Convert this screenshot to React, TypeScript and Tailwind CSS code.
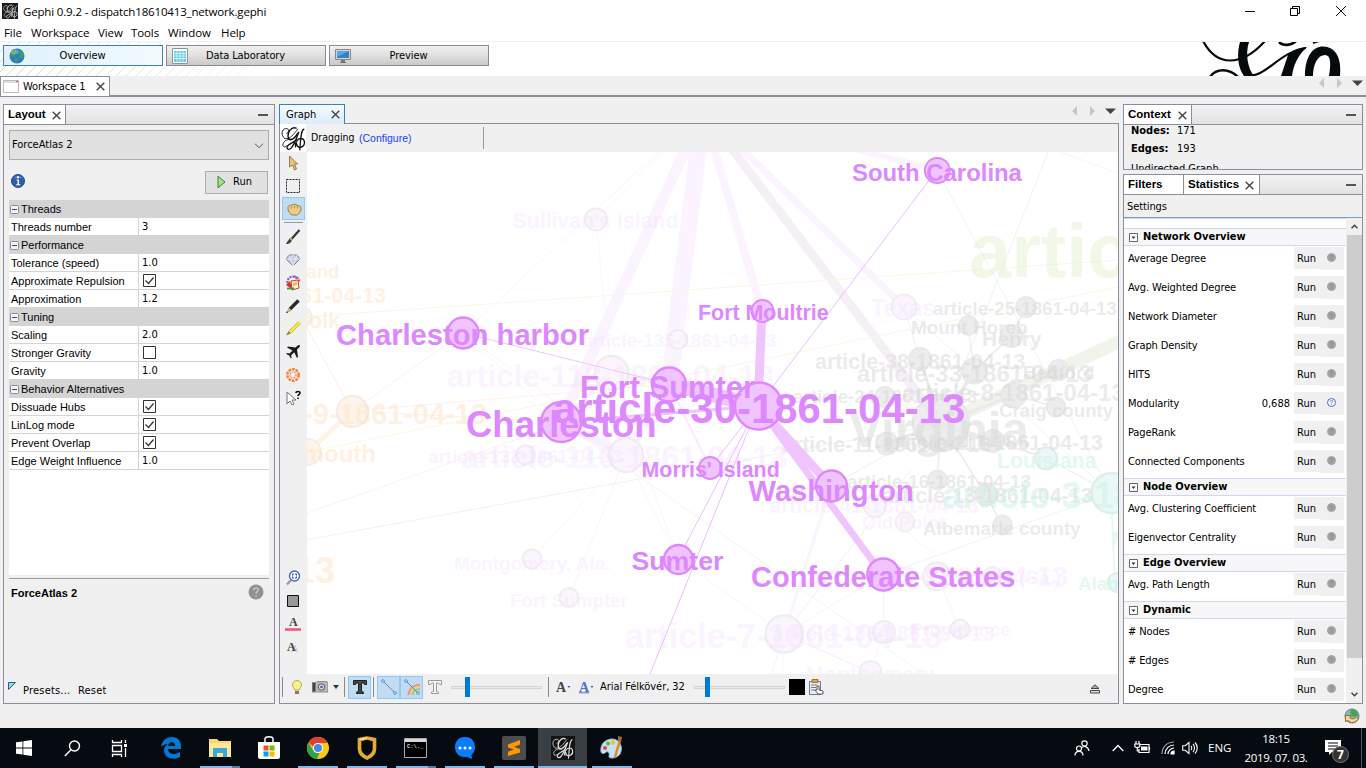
import React from "react";

type P = { children?: React.ReactNode };
const TAHOMA = "font-['DejaVu_Sans_Condensed','DejaVu_Sans',sans-serif]";

/* ---------- small shared pieces ---------- */

const Close = () => (
  <svg width="9" height="9" viewBox="0 0 9 9" className="shrink-0"><path d="M.7.7l7.6 7.6M8.3.7L.7 8.3" stroke="#444" strokeWidth="1.4" /></svg>
);
const Dash = () => <div className="mr-[6px] ml-auto h-[2px] w-[10px] bg-[#555]" />;
const Sep = () => <div className="h-5 w-px shrink-0 bg-[#8a8a8a]" />;

const Script = ({ size, color }: { size: number; color: string }) => (
  <svg width={size} height={size} viewBox="0 0 24 24" fill="none" stroke={color} strokeLinecap="round">
    <path d="M3.500 12C-.5 9 .5 3 4.500 2.500c3.500-.5 4 3.500 1 4.500" strokeWidth=".9" />
    <path d="M4 12c5 1 8-4 12-9" strokeWidth=".8" />
    <path d="M14.500 2C10 0 6.500 6 6.800 10c.3 5 5 4 9.200-3" strokeWidth="1.400" />
    <path d="M17 6c-2 5-4 12-7.500 15.500C7 24 4 21 7 18.500c3-2.500 6-3 8-6" strokeWidth="1.300" />
    <path d="M11 13c-4-1-8 1-9 4-1 3 2 4 3.500 2" strokeWidth=".9" />
    <path d="M14 20c-1-4 2-8 5-8 4 0 5 6 1 8-3 1.500-5-1-5-3" strokeWidth="1.300" />
    <path d="M22 3c-3 1-3 9-4 20" strokeWidth="1.200" />
  </svg>
);

/* ---------- top bars ---------- */

const TitleBar = () => (
  <div className="flex h-[22px] items-center bg-white font-['Open_Sans','Noto_Sans',sans-serif] text-[11.5px] text-black">
    <div className="ml-[2px] flex size-4 items-center justify-center bg-[#1c1c1c]"><Script size={15} color="#ddd" /></div>
    <span className="ml-[5px] pt-px tracking-[-0.16px] whitespace-nowrap">Gephi 0.9.2 - dispatch18610413_network.gephi</span>
    <svg className="mr-[19px] ml-auto" width="102" height="12" viewBox="0 0 102 12" fill="none" stroke="#000">
      <path d="M0 6.5h10" /><path d="M45.5 3.5h7v7h-7zM47.500 3.500v-2h7v7h-2" /><path d="M91 1l10 10M101 1L91 11" />
    </svg>
  </div>
);

const MenuBar = () => (
  <div className="flex h-5 items-center border-b border-[#f0f0f0] bg-white pt-[2px] pl-1 font-['Open_Sans','Noto_Sans',sans-serif] text-[11.5px] leading-4 tracking-[-0.1px] text-black">
    <span className="w-[27px]">File</span>
    <span className="w-[67px]">Workspace</span>
    <span className="w-[33px]">View</span>
    <span className="w-[37px]">Tools</span>
    <span className="w-[53px]">Window</span>
    <span>Help</span>
  </div>
);

const Globe = () => (
  <svg width="16" height="16" viewBox="0 0 16 16"><circle cx="8" cy="8" r="7.5" fill="#2c7cc0" /><path d="M2 3c3-3 5-2 6 0l-2 3-1 3-3-1zM9 2c4 0 6 3 6 6l-3 3-2-3 1-3zM6 10l3 1-1 4-3-2z" fill="#3f9f55" /><ellipse cx="6" cy="4" rx="4" ry="2.500" fill="#fff" opacity=".25" /></svg>
);
const Grid = () => (
  <svg width="16" height="16" viewBox="0 0 16 16"><path d="M.5.5h15v15H.5z" fill="#fff" stroke="#7d9aa0" /><path d="M2 3h12v11H2z" fill="#66c9ea" /><path d="M2 5.500h12M2 8h12M2 10.500h12M5 3v11M8 3v11M11 3v11" stroke="#e6f8fd" strokeWidth=".8" /></svg>
);
const Monitor = () => (
  <svg width="16" height="16" viewBox="0 0 16 16"><path d="M.5 1.500h15v10H.5z" fill="#d5d5d5" stroke="#888" /><path d="M2 3h12v7H2z" fill="#2f83cd" /><path d="M2 3h12L2 9z" fill="#58a5e2" /><path d="M6 12h4v2h1v1H5v-1h1z" fill="#777" /></svg>
);

const ModeButton = ({ icon, label, on }: { icon: React.ReactNode; label: string; on?: boolean }) => (
  <div className={`flex h-[21px] w-40 items-center border pl-[5px] ${on ? "border-[#3c7fb1] bg-linear-to-r from-[#dff2fb] to-[#f3fafe]" : "border-[#8b8b98] bg-linear-to-b from-[#f0f0f0] via-[#e0e0e0] to-[#c9c9c9]"}`}>
    {icon}
    <span className="flex-1 pt-px pr-[22px] text-center text-[11px] tracking-[-0.1px]">{label}</span>
  </div>
);

const ModeBar = () => (
  <div className={`flex h-[34px] bg-white pt-[3px] pl-[3px] ${TAHOMA}`}>
    <svg className="absolute top-[42px] left-0" width="310" height="34">
      <defs><linearGradient id="hf"><stop offset="0" stopColor="#fff" stopOpacity="0" /><stop offset="1" stopColor="#fff" /></linearGradient></defs>
      {Array.from({ length: 36 }, (_, i) => <path key={i} d={`M${i * 10 - 34} 34l34-34`} stroke="#d4d4d4" />)}
      <rect width="310" height="34" fill="url(#hf)" />
    </svg>
    <div className="relative flex gap-[3px]">
      <ModeButton icon={<Globe />} label="Overview" on />
      <ModeButton icon={<Grid />} label="Data Laboratory" />
      <ModeButton icon={<Monitor />} label="Preview" />
    </div>
    <svg className="-mt-[3px] mr-[24px] ml-auto" width="140" height="34" viewBox="0 0 140 34" fill="none" stroke="#050a0c">
      <path d="M1 -1c7 13 16 19.500 27 19.500C42 18.500 54 9 63 -1" strokeWidth="2.200" />
      <path d="M8 35c6-9 19-9 28 0" strokeWidth="2.400" />
      <path d="M38 0h9c-4 12-1 27 5 34H42C35 25 35 10 38 0z" fill="#050a0c" stroke="none" />
      <path d="M46 33c16 4 32-24 58-27" strokeWidth="2.200" />
      <path d="M105 5c-8 1-14 3-19 8l-7 21h11c1-10 6-21 15-29z" fill="#050a0c" stroke="none" />
      <path d="M77 0c4 4 12 4 17-1" strokeWidth="2.600" />
      <path d="M103 34C103 14 111 4.500 121 4.500c12 0 19 11 17 29.500h-11c2-12 2-21-4-21-7 0-12 9-12 21z" fill="#050a0c" stroke="none" />
      <path d="M111 1l6-2" strokeWidth="2" />
    </svg>
  </div>
);

const Arrows = () => (
  <svg width="47" height="12" viewBox="0 0 47 12"><path d="M7 1v10L2 6zM20 1v10l5-5z" fill="#c6c6c6" /><path d="M35 3.500h11L40.500 9z" fill="#444" /></svg>
);

const WorkspaceTabs = () => (
  <div className={`flex h-[21px] border-b-2 border-[#8b8e9b] bg-[#f0f0f0] text-[11px] ${TAHOMA}`}>
    <div className="flex h-5 w-[110px] items-center border border-b-0 border-[#8b8e9b] bg-white pl-[2px]">
      <svg width="16" height="14" viewBox="0 0 16 14"><path d="M.5.5h15v12H.5z" fill="#fff" stroke="#bbb" /><path d="M1 1h14v2H1z" fill="#ddd" /><path d="M13 1h2v1h-2z" fill="#d55" /></svg>
      <span className="ml-[4px] w-[73px] pt-px tracking-[-0.1px] whitespace-nowrap">Workspace 1</span>
      <Close />
    </div>
    <div className="mt-px mr-[2px] ml-auto"><Arrows /></div>
  </div>
);

/* ---------- layout panel ---------- */

const Tab = ({ children, className = "" }: P & { className?: string }) => (
  <div className={`flex h-full shrink-0 items-center border-r border-[#8b8e9b] bg-white pt-px pl-[4px] font-['Liberation_Sans',sans-serif] text-[11.5px] font-bold ${className}`}>{children}</div>
);
const Head = ({ children }: P) => (
  <div className="flex h-5 shrink-0 items-center border-b border-[#8b8e9b] bg-linear-to-b from-[#f2f2f2] to-[#e2e2e2]">{children}</div>
);

const Group = ({ label }: { label: string }) => (
  <div className="flex h-[18px] items-center bg-[#d4d4d4] pl-px">
    <svg width="9" height="9" viewBox="0 0 9 9"><rect x=".5" y=".5" width="8" height="8" rx="1" fill="#f4f4f4" stroke="#8e8e8e" /><path d="M2 4.500h5" stroke="#2a4a9a" /></svg>
    <span className="ml-[2px]">{label}</span>
  </div>
);
const Prop = ({ label, value }: { label: string; value: string | boolean }) => (
  <div className="flex h-[18px] border-b border-[#d4d4d4]">
    <span className="w-[130px] shrink-0 border-r border-[#d4d4d4] pt-px pl-[2px] leading-[17px] whitespace-nowrap">{label}</span>
    {typeof value === "string" ? (
      <span className={`pl-[3px] leading-[18px] ${TAHOMA}`}>{value}</span>
    ) : (
      <svg className="ml-1 mt-[2px]" width="13" height="13" viewBox="0 0 13 13"><path d="M.5.5h12v12H.5z" fill="#fff" stroke="#333" />{value && <path d="M2.500 6.500l3 3 5-6" fill="none" stroke="#333" strokeWidth="1.200" />}</svg>
    )}
  </div>
);

const LayoutPanel = () => (
  <div className="flex h-[600px] w-[272px] shrink-0 flex-col border border-[#8b8e9b] bg-[#f0f0f0]">
    <Head><Tab className="w-[62px] justify-between pr-[4px]">Layout<Close /></Tab><Dash /></Head>
    <div className={`mx-[5px] mt-[5px] flex h-[30px] items-center justify-between border border-[#adadad] bg-[#e1e1e1] pt-px pr-1 pl-[2px] text-[11px] ${TAHOMA}`}>
      ForceAtlas 2
      <svg width="10" height="6" viewBox="0 0 10 6" fill="none" stroke="#555"><path d="M1 .7l4 4 4-4" /></svg>
    </div>
    <div className="flex h-[40px] items-center justify-between pt-[4px] pr-[6px] pl-[7px]">
      <svg className="mb-[2px]" width="14" height="14" viewBox="0 0 15 15"><circle cx="7.500" cy="7.500" r="7" fill="#2f5fb3" stroke="#254a91" /><path d="M3 4a6 5 0 0 1 9 0z" fill="#7fa3dc" /><path d="M6 6h2.500v5H10v1H5.500v-1H7V7H6zM6.500 2.500h2v2h-2z" fill="#fff" /></svg>
      <div className={`flex h-[23px] w-[63px] items-center border border-[#adadad] bg-[#e1e1e1] pl-[11px] text-[11px] ${TAHOMA}`}>
        <svg width="9" height="14" viewBox="0 0 9 14"><path d="M1 1.200v11.600L8 7z" fill="#a9dd93" stroke="#2e8b1e" /></svg>
        <span className="ml-[7px] pt-px">Run</span>
      </div>
    </div>
    <div className="mx-[5px] h-[375px] bg-white font-['Liberation_Sans',sans-serif] text-[11px]">
      <Group label="Threads" />
      <Prop label="Threads number" value="3" />
      <Group label="Performance" />
      <Prop label="Tolerance (speed)" value="1.0" />
      <Prop label="Approximate Repulsion" value={true} />
      <Prop label="Approximation" value="1.2" />
      <Group label="Tuning" />
      <Prop label="Scaling" value="2.0" />
      <Prop label="Stronger Gravity" value={false} />
      <Prop label="Gravity" value="1.0" />
      <Group label="Behavior Alternatives" />
      <Prop label="Dissuade Hubs" value={true} />
      <Prop label="LinLog mode" value={true} />
      <Prop label="Prevent Overlap" value={true} />
      <Prop label="Edge Weight Influence" value="1.0" />
    </div>
    <div className="mx-[5px] mt-[3px] flex h-[104px] justify-between border-t border-[#9a9a9a] pt-[5px] pr-[5px] pl-[2px]">
      <span className="pt-px font-['Liberation_Sans',sans-serif] text-[11px] font-bold">ForceAtlas 2</span>
      <svg width="16" height="16" viewBox="0 0 16 16"><circle cx="8" cy="8" r="7.500" fill="#919191" /><path d="M5.700 6.200c0-3 4.600-3 4.600-.2 0 1.600-2.300 1.700-2.300 3.700M8 11.300v1.400" fill="none" stroke="#c4c4c4" strokeWidth="1.500" /></svg>
    </div>
    <div className={`flex pl-[4px] text-[11px] ${TAHOMA}`}>
      <svg width="8" height="9" viewBox="0 0 8 9"><path d="M.5.5h7l-7 7z" fill="#9fd4ef" stroke="#1d5f8f" /></svg>
      <span className="mt-[1px] ml-[7px] w-[55px] tracking-[0.2px]">Presets...</span>
      <span className="mt-[1px] tracking-[0.2px]">Reset</span>
    </div>
  </div>
);

/* ---------- graph ---------- */

type Tone = "p" | "g" | "o" | "t" | "l" | "h";
const FILL: Record<Tone, string> = { p: "#faf5fd", g: "#eaeaea", o: "#fff2e6", t: "#e8f8f4", l: "#f0f7e8", h: "#efc4ff" };
const RING: Record<Tone, string> = { p: "#efedf1", g: "#e8e8e8", o: "#f3ede6", t: "#deefea", l: "#e8efe0", h: "#dd88ff" };
const INK: Record<Tone, string> = { p: "#f5e0ff", g: "#d8d8d8", o: "#ffe2c4", t: "#c9f1e6", l: "#dff0cc", h: "#dd88ff" };
const INK_ALPHA: Record<Tone, number> = { p: 0.4, g: 0.5, o: 0.5, t: 0.5, l: 0.45, h: 1 };

type Edge = [number, number, number, number, number, string];
const faintEdges: Edge[] = [
  [703, 111, 561, 422, 11, "#fbf3ff"], [703, 111, 669, 384, 17, "#fbf3ff"], [703, 111, 762, 311, 8, "#fbf3ff"],
  [703, 111, 941, 424, 9, "#f5f0f6"], [703, 111, 904, 307, 7, "#fbf3ff"], [703, 111, 937, 170, 6, "#fbf3ff"],
  [703, 111, 596, 219, 1, "#fbf3ff"], [703, 111, 463, 333, 1, "#fbf3ff"], [596, 219, 611, 373, 1, "#fbf3ff"],
  [301, 317, 1118, 260, 1, "#f8f8e2"], [308, 452, 1118, 287, 1, "#f8f8e2"],
  [463, 333, 352, 411, 1, "#fff0f0"], [463, 333, 561, 422, 1, "#fbf3ff"], [463, 333, 626, 455, 1, "#fbf3ff"],
  [352, 411, 669, 384, 1, "#fff0f0"], [352, 411, 561, 422, 1, "#fff0f0"], [301, 317, 352, 411, 1, "#ffeedd"],
  [352, 411, 308, 452, 5, "#fff2e6"], [300, 541, 941, 424, 1, "#f9efe6"], [307, 513, 561, 424, 1, "#fff0f0"],
  [626, 455, 532, 559, 1, "#fbf3ff"], [626, 455, 569, 598, 1, "#fbf3ff"], [626, 455, 678, 559, 1, "#fbf3ff"],
  [611, 373, 678, 559, 1, "#fbf3ff"], [561, 422, 925, 675, 1, "#eef6fd"], [561, 422, 626, 455, 9, "#fbf0ff"],
  [561, 422, 611, 373, 4, "#fbf0ff"], [611, 373, 669, 384, 4, "#fbf0ff"], [678, 340, 671, 384, 1, "#fbf3ff"],
  [669, 384, 626, 455, 8, "#fbf3ff"], [669, 384, 710, 468, 2, "#f9eaff"], [525, 455, 561, 422, 1, "#fbf3ff"],
  [678, 559, 784, 634, 1, "#fbf3ff"], [831, 486, 784, 634, 3, "#fbf3ff"], [784, 634, 883, 575, 1, "#fbf3ff"],
  [784, 634, 911, 470, 1, "#f2f0f2"], [784, 634, 870, 672, 1, "#f9ebff"], [784, 634, 771, 676, 1, "#fff0f0"],
  [784, 634, 782, 676, 1, "#fbf3ff"], [883, 575, 884, 632, 1, "#f7f0fa"], [884, 632, 870, 672, 1, "#fbf3ff"],
  [883, 575, 1111, 493, 1, "#e8f7f5"], [875, 506, 960, 575, 1, "#fbf3ff"], [937, 576, 960, 629, 1, "#fbf3ff"],
  [937, 170, 1111, 493, 1, "#eaf7f5"], [1048, 152, 941, 424, 1, "#f1f3e9"], [1060, 152, 1118, 173, 1, "#f0f7f5"],
  [904, 307, 1111, 493, 1, "#eaf7f5"], [904, 307, 920, 359, 1, "#f3eef4"], [941, 424, 1125, 339, 13, "#f0f4eb"],
  [941, 424, 1046, 458, 2, "#e9f0ed"], [1046, 458, 1111, 493, 1, "#e0f4ef"], [1111, 493, 1115, 583, 2, "#e8f8f4"],
  [941, 424, 920, 359, 3, "#ebebeb"], [941, 424, 974, 371, 4, "#ebebeb"], [974, 371, 968, 325, 1, "#ebebeb"],
  [974, 371, 1011, 336, 1.500, "#ebebeb"], [1011, 336, 1026, 307, 1.500, "#ebebeb"], [941, 424, 885, 397, 1, "#ebebeb"],
  [941, 424, 1013, 395, 3, "#ebebeb"], [1013, 395, 1058, 370, 2, "#ebebeb"], [1013, 395, 1056, 407, 1.500, "#ebebeb"],
  [941, 424, 887, 443, 3, "#ebebeb"], [941, 424, 993, 441, 4, "#ebebeb"], [941, 424, 937, 480, 1.500, "#ebebeb"],
  [941, 424, 986, 495, 1.500, "#ebebeb"], [986, 495, 1002, 525, 1.500, "#ebebeb"], [941, 424, 831, 486, 1, "#f1eef2"],
];
const strongEdges: Edge[] = [
  [463, 333, 669, 384, 1, "#efc4ff"], [758, 406, 937, 170, 1, "#ecbcfd"], [758, 406, 762, 311, 9, "#efc4ff"],
  [758, 406, 669, 384, 15, "#efc4ff"], [758, 406, 561, 422, 3, "#efc4ff"], [758, 406, 710, 468, 1, "#ecbcfd"],
  [758, 406, 678, 559, 1, "#ecbcfd"], [758, 406, 650, 674, 1, "#ecbcfd"], [758, 406, 831, 486, 9, "#efc4ff"],
  [758, 406, 883, 575, 7, "#efc4ff"],
];
type Node = [number, number, number, Tone];
const nodes: Node[] = [
  [596, 219.500, 12, "p"], [611.500, 373, 18, "p"], [678, 339.500, 10.500, "p"], [626, 455, 18, "p"], [525.500, 455, 10.500, "p"],
  [904, 307, 13.500, "p"], [532, 559, 10.500, "p"], [569, 597.500, 10.500, "p"], [784, 634, 19.500, "p"], [884, 632, 12, "p"],
  [960, 629, 10.500, "p"], [870.500, 672, 12, "p"], [875, 506, 12, "p"], [905, 522, 10.500, "p"], [937, 576.500, 15, "p"], [992.500, 576, 10, "p"],
  [941, 423, 29, "g"], [1026, 307, 11, "g"], [968.500, 325.500, 10.500, "g"], [1011.500, 336, 12, "g"], [920, 359, 12, "g"],
  [974, 371, 13.500, "g"], [885, 397, 11, "g"], [1013.500, 395, 13.500, "g"], [1056, 407, 10.500, "g"], [1058.500, 370, 11, "g"],
  [887, 443.500, 12, "g"], [993, 441, 12, "g"], [937.500, 480, 10.500, "g"], [986.500, 494.500, 12, "g"], [1002.500, 525, 10.500, "g"],
  [1046, 458.500, 12, "t"], [1111.500, 493, 21, "t"], [1117, 582.500, 10.500, "t"],
  [301, 317, 11.500, "o"], [352.500, 411.500, 16.500, "o"], [308, 452, 14, "o"],
  [937.300, 170.500, 13.5, "h"], [762.500, 311, 12, "h"], [463, 333, 16.5, "h"], [669, 384.500, 18, "h"], [561.300, 422, 21, "h"],
  [758.500, 406, 24.5, "h"], [710, 468, 12, "h"], [831.500, 486, 16.5, "h"], [678.500, 559.500, 15.500, "h"], [883.300, 574.500, 17, "h"],
];
/* x of the left edge (or right edge for clipped labels), baseline, font size, text, tone */
type Label = [number, number, number, string, Tone, ("end" | "start")?];
const labels: Label[] = [
  [512.500, 228, 21.300, "Sullivan's Island", "p"], [447, 387, 31.600, "article-118-1861-04-13", "p"], [582, 347, 18.700, "article-135-1861-04-13", "p"],
  [461, 468, 31.600, "article-116-1861-04-13", "p"], [428, 463, 18.700, "article-133-1861-04-13", "p"], [871, 316, 23.200, "Texas", "p"],
  [454, 569.500, 18.900, "Montgomery, Ala.", "p"], [510, 607, 18.800, "Fort Sumpter", "p"], [625, 647.500, 34.200, "article-7-1861-04-13", "p"],
  [772, 641, 21.400, "article-136-1861-04-13", "p"], [910, 636, 18.700, "Providence", "p"], [806, 681.500, 21.400, "Montgomery", "p"],
  [769, 513, 21.400, "article-41-1861-04-13", "p"], [862, 529, 18.800, "Old Point", "p"], [1068, 586, 28.200, "article-5-1861-04-13", "p", "end"],
  [1061, 584, 18.700, "Savannah (Ga.)", "p", "end"],
  [849, 446.500, 49.300, "Virginia", "g"], [933, 315, 18.700, "article-25-1861-04-13", "g"], [911, 333.500, 18.900, "Mount Horeb", "g"],
  [982, 346, 21, "Henry", "g"], [815, 369, 21.400, "article-38-1861-04-13", "g"], [857, 382, 23.900, "article-33-1861-04-13", "g"],
  [793, 403, 18.700, "article-24-1861-04-13", "g"], [902, 401, 24, "article-8-1861-04-13", "g"], [999, 417, 18.700, "Craig county", "g"],
  [1023, 378.500, 18.700, "Bedford", "g"], [782, 452, 21.400, "article-11-1861-04-13", "g"], [883, 449.500, 21.400, "article-111-1861-04-13", "g"],
  [847, 488, 18.700, "article-16-1861-04-13", "g"], [882, 503, 21.400, "article-13-1861-04-13", "g"], [923, 534.500, 18.800, "Albemarle county", "g"],
  [997, 467.500, 21.300, "Louisiana", "t"], [942, 508, 36.400, "article-3-1861-04-13", "t"], [1078, 590, 18.700, "Alabama", "t"], [1112, 545, 18.700, "Mobile", "t"],
  [969, 277, 76, "article-1-1861-04-13", "l"],
  [339.500, 278, 18.700, "Maryland", "o", "end"], [386, 303, 21.400, "article-12-1861-04-13", "o", "end"], [340, 328, 21.400, "Norfolk", "o", "end"],
  [487, 423.500, 29, "article-9-1861-04-13", "o", "end"], [376, 462, 24, "Portsmouth", "o", "end"], [335, 583, 36, "article-6-1861-04-13", "o", "end"],
  [336, 344.700, 29.200, "Charleston harbor", "h"], [580, 397.500, 30.900, "Fort Sumter", "h"], [466, 436.700, 36.500, "Charleston", "h"],
  [553, 423.300, 41.900, "article-30-1861-04-13", "h"], [852, 180.700, 23.900, "South Carolina", "h"], [698, 320, 21.400, "Fort Moultrie", "h"],
  [641.500, 477, 21.400, "Morris' Island", "h"], [748.500, 500.700, 29.1, "Washington", "h"], [631.500, 570, 26.700, "Sumter", "h"], [751, 586.500, 29, "Confederate States", "h"],
];

const LabelText = ({ l }: { l: Label }) => (
  <text x={l[0]} y={l[1]} fontSize={l[2]} fill={INK[l[4]]} fillOpacity={INK_ALPHA[l[4]]} textAnchor={l[5] ?? "start"}>{l[3]}</text>
);
const drawEdge = (e: Edge, i: number) => <line key={i} x1={e[0]} y1={e[1]} x2={e[2]} y2={e[3]} strokeWidth={e[4]} stroke={e[5]} />;
const drawNode = (n: Node, i: number) => (
  <circle key={i} cx={n[0]} cy={n[1]} r={n[2] - 1} fill={FILL[n[3]]} fillOpacity={n[3] === "h" ? 1 : 0.850} stroke={RING[n[3]]} strokeWidth={n[2] > 15 ? 2.400 : 1.800} />
);

const Canvas = () => (
  <svg width="811" height="522" viewBox="307 152 811 522" className="block bg-white font-['Liberation_Sans',sans-serif] font-bold">
    {faintEdges.map(drawEdge)}
    {nodes.filter((n) => n[3] !== "h").map(drawNode)}
    {labels.filter((l) => l[4] !== "h").map((l) => <LabelText key={l[3]} l={l} />)}
    {strongEdges.map(drawEdge)}
    {nodes.filter((n) => n[3] === "h").map(drawNode)}
    {labels.filter((l) => l[4] === "h").map((l) => <LabelText key={l[3]} l={l} />)}
  </svg>
);

const Ico = ({ children, on }: P & { on?: boolean }) => (
  <div className={`flex h-[23px] w-[23px] shrink-0 items-center justify-center ${on ? "border border-[#90c8f6] bg-[#bfdcf3]" : ""}`}>
    <svg width="16" height="16" viewBox="0 0 16 16" fill="none" className="shrink-0">{children}</svg>
  </div>
);

const ToolStrip = () => (
  <div className="flex h-[522px] w-[27px] shrink-0 flex-col items-start bg-[#f0f0f0] pl-[1px]">
    <div className="-mt-px"><Ico><path d="M4.5 1v11l3-2 2 5 2-1-2-5h3z" fill="#e8c478" stroke="#8f7138" strokeWidth=".9" /></Ico></div>
    <Ico><path d="M1.500 1.500h13v13h-13z" stroke="#222" strokeDasharray="2 1" /></Ico>
    <div className="ml-px"><Ico on><path d="M2 7c0-3 2-3 3-2 0-2 3-2 3-1 1-1 3-1 3 1 2-1 4 0 4 2 0 4-2 6-4 7H6C3 12 2 10 2 7z" fill="#ecca8c" stroke="#a67c35" /><path d="M5.500 5.500v2M8.500 5v2M11.500 5.500v2" stroke="#b68d45" /></Ico></div>
    <div className="mt-[2px] mb-[2px] ml-[3px] h-px w-[19px] shrink-0 bg-[#999]" />
    <Ico><path d="M14.500 1l-8 9" stroke="#333" strokeWidth="2.200" /><path d="M7 10l-2-1-3 4-1 2c3 0 6-1 6-5z" fill="#444" /><path d="M5 9l2 2" stroke="#c9a978" strokeWidth="2" /></Ico>
    <Ico><path d="M4 3h8l3 4-7 7-7-7z" fill="#c3c8dc" stroke="#7d84a0" /><path d="M1 7h14M4 3l4 11 4-11M5 7l3-4 3 4" stroke="#eef1fa" strokeWidth=".8" /></Ico>
    <Ico><path d="M2.500 8a5.500 5.500 0 0 1 10-4" stroke="#7a65c8" strokeWidth="2.200" strokeDasharray="2 1" /><path d="M9 1.500c3 0 5 2 5.500 5" stroke="#e0459a" strokeWidth="2" strokeDasharray="2 1" /><path d="M1 10l4-4 2 8z" fill="#d33030" /><path d="M6 6l7-1 1 8-7 2z" fill="#f8efe0" stroke="#c8402a" /><path d="M8 8l4-1v3l-4 1z" fill="#f2b93a" /><path d="M2 13.500h7" stroke="#4a9a3a" strokeWidth="2" /></Ico>
    <Ico><path d="M13.500 2.500L5 11" stroke="#2a2a2a" strokeWidth="3.400" /><path d="M3.300 9.500l3.200 3.200L2 15z" fill="#c9a978" /><path d="M1 15l1-2 1 1.500z" fill="#111" /></Ico>
    <Ico><path d="M14.500 1.500L5 11" stroke="#c3b61c" strokeWidth="3.400" /><path d="M14.500 1.500L5 11" stroke="#f7ee4c" strokeWidth="2" /><path d="M3.500 10l2.500 2.500-5 2z" fill="#8a8a3a" /></Ico>
    <Ico><path d="M14.800 1.200c-1-.8-2.300 0-4.300 2.300L3 2.600l-1 1L7.500 6.500l-3 3-2.500-.4-.8.8 3 1.600L5.800 14.500l.8-.8-.4-2.500 3-3L12 14l1-1-1-7.500c2.300-2 3.500-3.500 2.800-4.300z" fill="#1b1b1b" /></Ico>
    <Ico><circle cx="8" cy="8" r="5.700" stroke="#ff7a3c" strokeWidth="2.400" strokeDasharray="2.600 1" /><circle cx="8" cy="8" r="3" stroke="#ff7a3c" strokeWidth="1.200" strokeDasharray="1.500 1" /></Ico>
    <Ico><path d="M2 2v12l3-3 2 4 2-1-2-4h4z" fill="#fff" stroke="#777" /><path d="M11 3c0-2 4-2 4 0 0 1.500-2 1.500-2 3M13 7.500V9" stroke="#111" strokeWidth="1.600" /></Ico>
    <div className="flex-1" />
    <Ico><circle cx="9.500" cy="6" r="5" fill="#fff" stroke="#4468c4" strokeWidth="1.400" /><path d="M7.500 5.500V4H9M10 4h1.500v1.500M11.500 6.500V8H10M9 8H7.500V6.500" stroke="#2447a8" /><path d="M6 10l-4 4.500" stroke="#999" strokeWidth="2.200" /></Ico>
    <Ico><path d="M2.500 2.500h11v11h-11z" fill="#999" stroke="#111" /></Ico>
    <Ico><text x="4" y="10" fontSize="12" fontWeight="bold" fontFamily="Liberation Serif" fill="#444">A</text><path d="M0 13.500h16" stroke="#ff4f7f" strokeWidth="2.600" /></Ico>
    <Ico><text x="6" y="13" fontSize="10" fontWeight="bold" fontFamily="Liberation Serif" fill="#ccc">A</text><text x="2" y="12" fontSize="12" fontWeight="bold" fontFamily="Liberation Serif" fill="#444">A</text></Ico>
    <div className="h-4 shrink-0" />
  </div>
);

const Slider = ({ lead, className = "" }: { lead: string; className?: string }) => (
  <div className={`flex w-[91px] shrink-0 items-center ${className}`}>
    <div className={`h-[3px] border border-r-0 border-[#d4d4d4] bg-[#e7eaea] ${lead}`} />
    <div className="h-5 w-[5px] bg-[#0078d7]" />
    <div className="h-[3px] flex-1 border border-l-0 border-[#d4d4d4] bg-[#e7eaea]" />
  </div>
);
const BigT = ({ fill, stroke }: { fill: string; stroke: string }) => (
  <path d="M1.500 1.500h13v4h-2l-1-1.500H9.500v8.500l2 .5v1.500h-7V13l2-.5V4h-2l-1 1.500h-2z" fill={fill} stroke={stroke} />
);

const GraphBottom = () => (
  <div className={`flex h-[29px] items-center bg-[#f0f0f0] pb-[3px] pl-[2px] text-[11px] ${TAHOMA}`}>
    <Sep />
    <div className="ml-[2px]"><Ico><path d="M3.500 6a4.500 4.500 0 1 1 9 0c0 2-2 3-2 5h-5c0-2-2-3-2-5z" fill="#faf08a" stroke="#b5a95a" /><path d="M6 12h4v3H6z" fill="#8a7a5a" /></Ico></div>
    <Ico><path d="M0 3.500h4l1-1h9l2 1V13H0z" fill="#b9b9b9" stroke="#8a8a8a" /><path d="M.5 4h3v8.500h-3z" fill="#444" /><circle cx="9.500" cy="8" r="3.200" fill="#d8dcec" stroke="#555" /><circle cx="9.500" cy="8" r="1.300" fill="#4a5a9a" /></Ico>
    <svg className="ml-[2px]" width="6" height="4" viewBox="0 0 6 4"><path d="M0 0h6L3 4z" fill="#333" /></svg>
    <div className="mr-[3px] ml-[5px] flex"><Sep /></div>
    <Ico on><BigT fill="#444" stroke="#222" /></Ico>
    <div className="mx-[2px] flex"><Sep /></div>
    <div className="ml-px flex">
      <Ico on><path d="M2 2l12 12" stroke="#5b86c8" /><circle cx="2" cy="2" r="1.300" fill="#fff" stroke="#5b86c8" /><circle cx="14" cy="14" r="1.300" fill="#fff" stroke="#5b86c8" /></Ico>
      <Ico on><path d="M4.500 16C5 10 9 6 16 6" stroke="#f08a9a" strokeWidth="2" /><path d="M6.500 16C7 11 10 8 16 8" stroke="#f2d36a" strokeWidth="2" /><path d="M8.500 16c.5-4 3-6 7.500-6" stroke="#8fd08a" strokeWidth="2" /><path d="M2 2l12 12" stroke="#5b86c8" /><circle cx="2" cy="2" r="1.300" fill="#fff" stroke="#5b86c8" /><circle cx="14" cy="14" r="1.300" fill="#fff" stroke="#5b86c8" /></Ico>
    </div>
    <Ico><BigT fill="#f5f5f5" stroke="#9a9a9a" /></Ico>
    <Slider lead="w-[14px]" className="ml-[5px]" />
    <div className="mr-[3px] ml-[6px] flex"><Sep /></div>
    <Ico><text x="0" y="13" fontSize="14" fontWeight="bold" fontFamily="Liberation Serif" fill="#444">A</text><path d="M11.500 7h3l-1.500 2z" fill="#335ab8" /></Ico>
    <Ico><text x="0" y="13" fontSize="14" fontWeight="bold" fontFamily="Liberation Serif" fill="#4a6fd0">A</text><path d="M0 13.800h10" stroke="#4a6fd0" /><path d="M11.500 7h3l-1.500 2z" fill="#335ab8" /></Ico>
    <span className="w-[96px] pt-px pl-[2px] tracking-[-0.05px] whitespace-nowrap">Arial Félkövér, 32</span>
    <Slider lead="w-[11px]" />
    <div className="ml-1 size-4 bg-black" />
    <Ico><path d="M.5 2.500h11v13H.5z" fill="#e9eef6" stroke="#5f7c9a" /><path d="M3 .5h6v3H3z" fill="#e0a44a" stroke="#a87524" /><path d="M2 6h6M2 8.500h5M2 11h4" stroke="#777" /><path d="M8 7l2 0v4l4 1v3H9l-3-4h2z" fill="#fff" stroke="#555" /></Ico>
    <svg className="mr-[18px] ml-auto mt-[3px]" width="10" height="10" viewBox="0 0 10 10"><path d="M5 .8L9 4.500H1z" fill="#aaa" stroke="#444" /><path d="M.5 6.500h9v2.500h-9z" fill="#ddd" stroke="#444" /></svg>
  </div>
);

const GraphPanel = () => (
  <div className="ml-[4px] flex h-[600px] w-[840px] shrink-0 flex-col">
    <div className={`flex h-5 items-start border-b border-[#8b8e9b] text-[11px] ${TAHOMA}`}>
      <div className="flex h-5 w-[66px] items-center justify-between border border-b-0 border-[#3c7fb1] bg-linear-to-b from-[#f5faff] to-[#dcebfa] pr-[4px] pl-[6px]"><span className="pt-px">Graph</span><Close /></div>
      <div className="mt-px mr-[2px] ml-auto"><Arrows /></div>
    </div>
    <div className="flex h-[580px] flex-col border border-t-0 border-[#8b8e9b]">
      <div className={`flex h-[28px] shrink-0 items-center bg-[#f0f0f0] text-[11px] ${TAHOMA}`}>
        <div className="flex h-full w-[26px] items-center justify-center bg-white"><Script size={25} color="#111" /></div>
        <span className="ml-[5px] w-[48px] text-[10.500px]">Dragging</span>
        <span className="w-[124px] pt-px font-['Liberation_Sans',sans-serif] text-[10.500px] text-[#1a3cff]">(Configure)</span>
        <div className="h-[22px] w-px bg-[#999]" />
      </div>
      <div className="flex h-[522px] shrink-0"><ToolStrip /><Canvas /></div>
      <GraphBottom />
    </div>
  </div>
);

/* ---------- right column ---------- */

const Section = ({ label }: { label: string }) => (
  <div className="flex h-[18px] shrink-0 items-center border-y border-[#cdd8f0] bg-[#f7f7f7] pl-[5px] font-bold">
    <svg width="9" height="9" viewBox="0 0 9 9"><path d="M.5.5h8v8h-8z" fill="#fff" stroke="#666" /><path d="M2.500 3.500h4l-2 2.500z" fill="#333" /></svg>
    <span className="ml-[5px] pt-px">{label}</span>
  </div>
);
const Stat = ({ label, value }: { label: string; value?: string }) => (
  <div className="flex h-[29px] shrink-0 pt-px pr-[2px] pl-[4px]">
    <span className="mt-[4px] tracking-[-0.12px] whitespace-nowrap">{label}</span>
    <span className="mt-[4px] mr-[4px] ml-auto">{value}</span>
    <div className="h-[22px] w-[27px] bg-[#f0f0f0] pt-[4px] pl-[3px]">Run</div>
    <div className="flex h-[23px] w-[23px] justify-center bg-[#f0f0f0] pt-[6px] pr-[3px]">
      <svg width="9" height="9" viewBox="0 0 9 9"><circle cx="4.500" cy="4.500" r="4" fill={value ? "#fff" : "#a2a2a2"} stroke={value ? "#4468dd" : "#a2a2a2"} /><path d="M3.200 3.700c0-1.700 2.600-1.700 2.600-.2 0 .9-1.300 1-1.300 2M4.500 6.300v.8" fill="none" stroke={value ? "#4468dd" : "#858585"} strokeWidth=".9" /></svg>
    </div>
  </div>
);

const RightColumn = () => (
  <div className={`ml-[4px] flex w-[240px] flex-col text-[11px] ${TAHOMA}`}>
    <div className="flex h-[66px] shrink-0 flex-col border border-[#8b8e9b] bg-[#f0f0f0]">
      <Head><Tab className="w-[68px] justify-between pr-[4px]">Context<Close /></Tab><Dash /></Head>
      <div className="h-[44px] overflow-hidden pl-[7px]">
        <div className="-mt-[2px] flex h-[18px]"><b className="w-[46px]">Nodes:</b>171</div>
        <div className="flex h-[20px]"><b className="w-[46px]">Edges:</b>193</div>
        <div>Undirected Graph</div>
      </div>
    </div>
    <div className="mt-[4px] flex h-[530px] flex-col border border-[#8b8e9b] bg-[#f0f0f0]">
      <Head>
        <Tab className="w-[60px] bg-transparent">Filters</Tab>
        <Tab className="w-[76px] justify-between pr-[5px]">Statistics<Close /></Tab><Dash />
      </Head>
      <div className="h-[23px] shrink-0 border-b border-[#7f9db9] pt-[4px] pl-[3px] tracking-[-0.1px]">Settings</div>
      <div className="flex h-[485px]">
        <div className="flex w-[222px] flex-col overflow-hidden bg-white">
          <div className="h-[10px] shrink-0 border-t border-[#cdd8f0]" />
          <Section label="Network Overview" />
          <Stat label="Average Degree" /><Stat label="Avg. Weighted Degree" /><Stat label="Network Diameter" /><Stat label="Graph Density" />
          <Stat label="HITS" /><Stat label="Modularity" value="0,688" /><Stat label="PageRank" /><Stat label="Connected Components" />
          <Section label="Node Overview" />
          <Stat label="Avg. Clustering Coefficient" /><Stat label="Eigenvector Centrality" />
          <Section label="Edge Overview" />
          <Stat label="Avg. Path Length" />
          <Section label="Dynamic" />
          <Stat label="# Nodes" /><Stat label="# Edges" /><Stat label="Degree" />
        </div>
        <div className="flex flex-1 flex-col items-center bg-[#f0f0f0]">
          <svg className="my-[6px] shrink-0" width="7" height="5" viewBox="0 0 7 5" fill="none" stroke="#444" strokeWidth="1.600"><path d="M.5 4.300l3-3 3 3" /></svg>
          <div className="h-[423px] w-[15px] bg-[#cdcdcd]" />
          <svg className="mt-[34px] shrink-0" width="7" height="5" viewBox="0 0 7 5" fill="none" stroke="#444" strokeWidth="1.600"><path d="M.5.7l3 3 3-3" /></svg>
        </div>
      </div>
    </div>
  </div>
);

/* ---------- taskbar ---------- */

const Cell = ({ children, run, split, on }: P & { run?: boolean; split?: boolean; on?: boolean }) => (
  <div className={`flex h-10 w-[49px] flex-col items-center ${on ? "bg-[#3b3e43]" : ""}`}>
    <div className="flex h-[38px] items-center pt-[2px]">{children}</div>
    {run && <div className={`flex h-[2px] bg-[#76b9ed] ${on ? "w-full" : "w-10"}`}>{split && <div className="ml-auto w-2 bg-[#4f7ea3]" />}</div>}
  </div>
);

const Taskbar = () => (
  <div className="flex h-10 bg-[#060b12] font-['Open_Sans','Noto_Sans',sans-serif] text-[12px] text-white">
    <div className="flex w-[146px] items-center">
      <svg className="ml-4" width="16" height="16" viewBox="0 0 16 16" fill="#fff"><path d="M0 2.300L6.500 1.400v6.200H0zM7.300 1.300L16 0v7.600H7.300zM0 8.400h6.500v6.200L0 13.700zM7.300 8.400H16V16l-8.700-1.300z" /></svg>
      <svg className="ml-[32px]" width="17" height="17" viewBox="0 0 17 17" fill="none" stroke="#fff" strokeWidth="1.400"><circle cx="10.500" cy="6" r="5" /><path d="M7 9.700L.8 16" /></svg>
      <svg className="ml-[30px]" width="17" height="17" viewBox="0 0 17 17" fill="none" stroke="#fff" strokeWidth="1.300"><path d="M1.500 0v2.500h9V0M1.500 5.500h9v6h-9zM1.500 17v-2.500h9V17M14.500 0v3M14.500 8v9" /><path d="M13 4h3v3h-3z" fill="#fff" stroke="none" /></svg>
    </div>
    <Cell><svg width="22" height="22" viewBox="0 0 22 22"><path d="M1 10C2 3 7 0 12 0c6 0 9 4 9 10v2H8c0 6 8 6 12 3v5c-7 4-16 1-16-7 0-3 2-5 4-6-4 0-6 2-7 3zM8 9h7c0-5-6-5-7 0z" fill="#0078d7" /></svg></Cell>
    <Cell run split><svg width="22" height="20" viewBox="0 0 22 20"><path d="M0 1h8l2 2h12v16H0z" fill="#f8d775" /><path d="M0 5h22v14H0z" fill="#ffe693" /><path d="M4 19v-9h14v9h-4v-4H8v4z" fill="#36a9e0" /></svg></Cell>
    <Cell><svg width="24" height="24" viewBox="0 0 24 24"><path d="M8 7V3c0-3 8-3 8 0v4" fill="none" stroke="#fff" strokeWidth="1.500" /><path d="M1 6h22v15c0 1-1 2-2 2H3c-1 0-2-1-2-2z" fill="#fff" /><path d="M6.500 9.500h5v5h-5z" fill="#f25022" /><path d="M12.500 9.500h5v5h-5z" fill="#7fba00" /><path d="M6.500 15.500h5v5h-5z" fill="#00a4ef" /><path d="M12.500 15.500h5v5h-5z" fill="#ffb900" /></svg></Cell>
    <Cell run><svg width="22" height="22" viewBox="0 0 22 22"><circle cx="11" cy="11" r="11" fill="#fbc814" /><path d="M1.500 5.500a11 11 0 0 1 19.200.5H11a5 5 0 0 0-4.700 3.500z" fill="#e0402f" /><path d="M1.500 5.500l5 8.500a5 5 0 0 0 6 1.800L10 22A11 11 0 0 1 1.500 5.500z" fill="#2da34e" /><circle cx="11" cy="11" r="5" fill="#fff" /><circle cx="11" cy="11" r="4" fill="#4285f4" /></svg></Cell>
    <Cell run><svg width="20" height="24" viewBox="0 0 20 24"><path d="M2.500 3.500C7 3 8 2 10 2s3 1 7.500 1.500V13c0 5-4 7-7.500 9-3.500-2-7.500-4-7.500-9z" fill="#07090d" stroke="#e3ac32" strokeWidth="3.600" /><path d="M2.500 3.500C7 3 8 2 10 2" fill="none" stroke="#ffe08a" strokeWidth="1.500" /></svg></Cell>
    <Cell run split><svg width="23" height="20" viewBox="0 0 23 20"><path d="M.5.5h22v19H.5z" fill="#000" stroke="#aaa" /><path d="M1 1h21v3H1z" fill="#d5d9dd" /><text x="3" y="10" fontSize="5.500" fontWeight="bold" fontFamily="Liberation Mono" fill="#ddd">C:\._</text></svg></Cell>
    <Cell run><svg width="22" height="22" viewBox="0 0 22 22"><path d="M11 0C4 0 1 5 1 10s3 9 8 10l4 0 5 2-.5-4C20 16 21 13 21 10c0-5-3-10-10-10z" fill="#0a7cff" /><circle cx="6" cy="11" r="1.500" fill="#fff" /><circle cx="11" cy="11" r="1.500" fill="#fff" /><circle cx="16" cy="11" r="1.500" fill="#fff" /></svg></Cell>
    <Cell run><svg width="24" height="24" viewBox="0 0 24 24"><rect width="24" height="24" rx="2" fill="#4d4d4d" /><path d="M6 8.500L18 4v4.500l-6 2.500 6 2v3.500L6 20v-4.200l6-2.300-6-2z" fill="#ff9800" /></svg></Cell>
    <Cell run on><div className="flex size-6 items-center justify-center bg-[#131313]"><Script size={22} color="#ddd" /></div></Cell>
    <Cell run><svg width="24" height="24" viewBox="0 0 24 24"><path d="M11 3C4 4 0 9 1 16c1 2 3 2 5 0 2-1 4 1 3 4-1 3 8 3 11-2 4-7-1-16-9-15z" fill="#c5e3f4" stroke="#8bb9d5" /><circle cx="5" cy="12" r="2" fill="#e0483c" /><circle cx="8" cy="7.500" r="2" fill="#63b53c" /><circle cx="13" cy="6.500" r="2.200" fill="#f5c22c" /><path d="M20 4l-5 17" stroke="#e08a2e" strokeWidth="2.600" /><path d="M18 0l4 1-1 5-3-1z" fill="#a5673a" /></svg></Cell>
    <div className="ml-auto flex items-center">
      <svg width="16" height="16" viewBox="0 0 16 16" fill="none" stroke="#fff" strokeWidth="1.200"><circle cx="10.500" cy="3.500" r="2.700" /><path d="M7.500 8c2-2.500 6.500-2 7.500 3" /><circle cx="5" cy="8.500" r="2.500" /><path d="M1 15.500c0-5.500 8-5.500 8 0" /></svg>
      <svg className="ml-[22px]" width="12" height="8" viewBox="0 0 12 8" fill="none" stroke="#fff" strokeWidth="1.300"><path d="M.7 7L6 1.500 11.300 7" /></svg>
      <svg className="ml-[10px]" width="17" height="14" viewBox="0 0 17 14" fill="none" stroke="#fff" strokeWidth="1.200"><path d="M6 3.500h9v8H5V8M15.500 6v3M2 0v3M5 0v3M.8 3h5v2c0 2-5 2-5 0zM3.300 7v3H5" /><path d="M7 5.500h6.500v4H7z" fill="#fff" stroke="none" /></svg>
      <svg className="ml-[10px]" width="14" height="14" viewBox="0 0 14 14" fill="none" stroke="#fff" strokeWidth="1.200"><path d="M1 13C1 6 6 1 13 1" opacity=".6" /><path d="M4 13c0-5 4-9 9-9M7 13c0-3 3-6 6-6" /><path d="M10 13c0-2 1-3 3-3v3z" fill="#fff" /></svg>
      <svg className="ml-[7px]" width="17" height="14" viewBox="0 0 17 14" fill="none" stroke="#fff" strokeWidth="1.100"><path d="M.7 4.700h2.500L7 1.500v11L3.200 9.300H.7zM9 5c1 1 1 3 0 4M11 3c2 2 2 6 0 8M13 1.500c3 3 3 8 0 11" /></svg>
      <span className="ml-[9px] w-[25px] text-[11.5px]">ENG</span>
      <div className="ml-[11px] flex w-[64px] flex-col text-center text-[11.500px] leading-[19px] tracking-[-0.350px] whitespace-nowrap"><span>18:15</span><span>2019. 07. 03.</span></div>
      <svg className="ml-[17px] mt-1" width="25" height="25" viewBox="0 0 25 25"><path d="M0 2h16v12H7l-3 3v-3H0z" fill="#fff" /><path d="M3 5h10M3 8h10M3 11h8" stroke="#060b12" strokeWidth="1.200" /><circle cx="15.500" cy="16.500" r="8" fill="#333" stroke="#777" /><text x="15.500" y="21" fontSize="12" fontWeight="bold" fill="#fff" textAnchor="middle">7</text></svg>
      <div className="ml-[11px] h-10 w-px bg-[#555]" />
      <div className="w-[4px]" />
    </div>
  </div>
);

export default function App() {
  return (
    <div className="relative flex h-[768px] w-[1366px] flex-col overflow-hidden bg-[#f0f0f0] text-black">
      <TitleBar />
      <MenuBar />
      <ModeBar />
      <WorkspaceTabs />
      <div className="flex h-[607px] pt-[7px] pl-[3px]">
        <LayoutPanel />
        <GraphPanel />
        <RightColumn />
      </div>
      <div className="flex h-6 items-center justify-end pr-[6px]">
        <svg width="16" height="16" viewBox="0 0 16 16"><circle cx="8" cy="8" r="7" fill="#7db4d8" stroke="#6b7c88" /><path d="M7 1c5 0 7 4 7 7l-5 1-3-4z" fill="#4aa552" /><path d="M1.500 7.500l6 0-2 2c2 2 5 1.500 7-.5l2 2c-3 4-8 5-11 1l-2 2z" fill="#f5d79a" stroke="#a06a20" /></svg>
      </div>
      <Taskbar />
    </div>
  );
}
